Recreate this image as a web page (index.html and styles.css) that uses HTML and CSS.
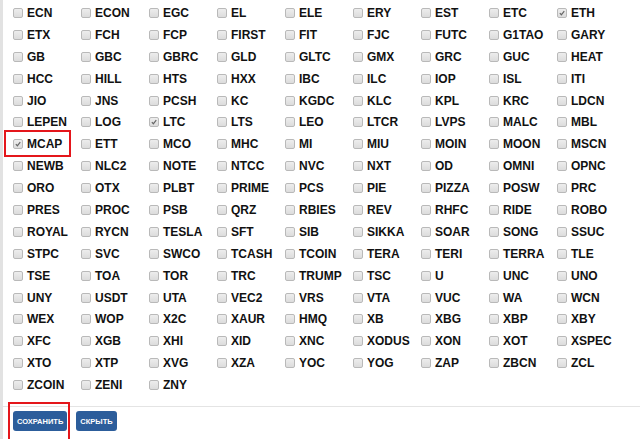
FILE: index.html
```html
<!DOCTYPE html>
<html>
<head>
<meta charset="utf-8">
<link rel="stylesheet" href="styles.css">
</head>
<body>
<div class="panel">
  <div class="grid">
    <label class="item"><span class="cb"></span>ECN</label>
    <label class="item"><span class="cb"></span>ECON</label>
    <label class="item"><span class="cb"></span>EGC</label>
    <label class="item"><span class="cb"></span>EL</label>
    <label class="item"><span class="cb"></span>ELE</label>
    <label class="item"><span class="cb"></span>ERY</label>
    <label class="item"><span class="cb"></span>EST</label>
    <label class="item"><span class="cb"></span>ETC</label>
    <label class="item"><span class="cb checked"><svg viewBox="0 0 10 10"><path d="M2.3 5.2 L4.2 7.2 L7.8 2.6"/></svg></span>ETH</label>

    <label class="item"><span class="cb"></span>ETX</label>
    <label class="item"><span class="cb"></span>FCH</label>
    <label class="item"><span class="cb"></span>FCP</label>
    <label class="item"><span class="cb"></span>FIRST</label>
    <label class="item"><span class="cb"></span>FIT</label>
    <label class="item"><span class="cb"></span>FJC</label>
    <label class="item"><span class="cb"></span>FUTC</label>
    <label class="item"><span class="cb"></span>G1TAO</label>
    <label class="item"><span class="cb"></span>GARY</label>

    <label class="item"><span class="cb"></span>GB</label>
    <label class="item"><span class="cb"></span>GBC</label>
    <label class="item"><span class="cb"></span>GBRC</label>
    <label class="item"><span class="cb"></span>GLD</label>
    <label class="item"><span class="cb"></span>GLTC</label>
    <label class="item"><span class="cb"></span>GMX</label>
    <label class="item"><span class="cb"></span>GRC</label>
    <label class="item"><span class="cb"></span>GUC</label>
    <label class="item"><span class="cb"></span>HEAT</label>

    <label class="item"><span class="cb"></span>HCC</label>
    <label class="item"><span class="cb"></span>HILL</label>
    <label class="item"><span class="cb"></span>HTS</label>
    <label class="item"><span class="cb"></span>HXX</label>
    <label class="item"><span class="cb"></span>IBC</label>
    <label class="item"><span class="cb"></span>ILC</label>
    <label class="item"><span class="cb"></span>IOP</label>
    <label class="item"><span class="cb"></span>ISL</label>
    <label class="item"><span class="cb"></span>ITI</label>

    <label class="item"><span class="cb"></span>JIO</label>
    <label class="item"><span class="cb"></span>JNS</label>
    <label class="item"><span class="cb"></span>PCSH</label>
    <label class="item"><span class="cb"></span>KC</label>
    <label class="item"><span class="cb"></span>KGDC</label>
    <label class="item"><span class="cb"></span>KLC</label>
    <label class="item"><span class="cb"></span>KPL</label>
    <label class="item"><span class="cb"></span>KRC</label>
    <label class="item"><span class="cb"></span>LDCN</label>

    <label class="item"><span class="cb"></span>LEPEN</label>
    <label class="item"><span class="cb"></span>LOG</label>
    <label class="item"><span class="cb checked"><svg viewBox="0 0 10 10"><path d="M2.3 5.2 L4.2 7.2 L7.8 2.6"/></svg></span>LTC</label>
    <label class="item"><span class="cb"></span>LTS</label>
    <label class="item"><span class="cb"></span>LEO</label>
    <label class="item"><span class="cb"></span>LTCR</label>
    <label class="item"><span class="cb"></span>LVPS</label>
    <label class="item"><span class="cb"></span>MALC</label>
    <label class="item"><span class="cb"></span>MBL</label>

    <label class="item highlight"><span class="cb checked"><svg viewBox="0 0 10 10"><path d="M2.3 5.2 L4.2 7.2 L7.8 2.6"/></svg></span>MCAP</label>
    <label class="item"><span class="cb"></span>ETT</label>
    <label class="item"><span class="cb"></span>MCO</label>
    <label class="item"><span class="cb"></span>MHC</label>
    <label class="item"><span class="cb"></span>MI</label>
    <label class="item"><span class="cb"></span>MIU</label>
    <label class="item"><span class="cb"></span>MOIN</label>
    <label class="item"><span class="cb"></span>MOON</label>
    <label class="item"><span class="cb"></span>MSCN</label>

    <label class="item"><span class="cb"></span>NEWB</label>
    <label class="item"><span class="cb"></span>NLC2</label>
    <label class="item"><span class="cb"></span>NOTE</label>
    <label class="item"><span class="cb"></span>NTCC</label>
    <label class="item"><span class="cb"></span>NVC</label>
    <label class="item"><span class="cb"></span>NXT</label>
    <label class="item"><span class="cb"></span>OD</label>
    <label class="item"><span class="cb"></span>OMNI</label>
    <label class="item"><span class="cb"></span>OPNC</label>

    <label class="item"><span class="cb"></span>ORO</label>
    <label class="item"><span class="cb"></span>OTX</label>
    <label class="item"><span class="cb"></span>PLBT</label>
    <label class="item"><span class="cb"></span>PRIME</label>
    <label class="item"><span class="cb"></span>PCS</label>
    <label class="item"><span class="cb"></span>PIE</label>
    <label class="item"><span class="cb"></span>PIZZA</label>
    <label class="item"><span class="cb"></span>POSW</label>
    <label class="item"><span class="cb"></span>PRC</label>

    <label class="item"><span class="cb"></span>PRES</label>
    <label class="item"><span class="cb"></span>PROC</label>
    <label class="item"><span class="cb"></span>PSB</label>
    <label class="item"><span class="cb"></span>QRZ</label>
    <label class="item"><span class="cb"></span>RBIES</label>
    <label class="item"><span class="cb"></span>REV</label>
    <label class="item"><span class="cb"></span>RHFC</label>
    <label class="item"><span class="cb"></span>RIDE</label>
    <label class="item"><span class="cb"></span>ROBO</label>

    <label class="item"><span class="cb"></span>ROYAL</label>
    <label class="item"><span class="cb"></span>RYCN</label>
    <label class="item"><span class="cb"></span>TESLA</label>
    <label class="item"><span class="cb"></span>SFT</label>
    <label class="item"><span class="cb"></span>SIB</label>
    <label class="item"><span class="cb"></span>SIKKA</label>
    <label class="item"><span class="cb"></span>SOAR</label>
    <label class="item"><span class="cb"></span>SONG</label>
    <label class="item"><span class="cb"></span>SSUC</label>

    <label class="item"><span class="cb"></span>STPC</label>
    <label class="item"><span class="cb"></span>SVC</label>
    <label class="item"><span class="cb"></span>SWCO</label>
    <label class="item"><span class="cb"></span>TCASH</label>
    <label class="item"><span class="cb"></span>TCOIN</label>
    <label class="item"><span class="cb"></span>TERA</label>
    <label class="item"><span class="cb"></span>TERI</label>
    <label class="item"><span class="cb"></span>TERRA</label>
    <label class="item"><span class="cb"></span>TLE</label>

    <label class="item"><span class="cb"></span>TSE</label>
    <label class="item"><span class="cb"></span>TOA</label>
    <label class="item"><span class="cb"></span>TOR</label>
    <label class="item"><span class="cb"></span>TRC</label>
    <label class="item"><span class="cb"></span>TRUMP</label>
    <label class="item"><span class="cb"></span>TSC</label>
    <label class="item"><span class="cb"></span>U</label>
    <label class="item"><span class="cb"></span>UNC</label>
    <label class="item"><span class="cb"></span>UNO</label>

    <label class="item"><span class="cb"></span>UNY</label>
    <label class="item"><span class="cb"></span>USDT</label>
    <label class="item"><span class="cb"></span>UTA</label>
    <label class="item"><span class="cb"></span>VEC2</label>
    <label class="item"><span class="cb"></span>VRS</label>
    <label class="item"><span class="cb"></span>VTA</label>
    <label class="item"><span class="cb"></span>VUC</label>
    <label class="item"><span class="cb"></span>WA</label>
    <label class="item"><span class="cb"></span>WCN</label>

    <label class="item"><span class="cb"></span>WEX</label>
    <label class="item"><span class="cb"></span>WOP</label>
    <label class="item"><span class="cb"></span>X2C</label>
    <label class="item"><span class="cb"></span>XAUR</label>
    <label class="item"><span class="cb"></span>HMQ</label>
    <label class="item"><span class="cb"></span>XB</label>
    <label class="item"><span class="cb"></span>XBG</label>
    <label class="item"><span class="cb"></span>XBP</label>
    <label class="item"><span class="cb"></span>XBY</label>

    <label class="item"><span class="cb"></span>XFC</label>
    <label class="item"><span class="cb"></span>XGB</label>
    <label class="item"><span class="cb"></span>XHI</label>
    <label class="item"><span class="cb"></span>XID</label>
    <label class="item"><span class="cb"></span>XNC</label>
    <label class="item"><span class="cb"></span>XODUS</label>
    <label class="item"><span class="cb"></span>XON</label>
    <label class="item"><span class="cb"></span>XOT</label>
    <label class="item"><span class="cb"></span>XSPEC</label>

    <label class="item"><span class="cb"></span>XTO</label>
    <label class="item"><span class="cb"></span>XTP</label>
    <label class="item"><span class="cb"></span>XVG</label>
    <label class="item"><span class="cb"></span>XZA</label>
    <label class="item"><span class="cb"></span>YOC</label>
    <label class="item"><span class="cb"></span>YOG</label>
    <label class="item"><span class="cb"></span>ZAP</label>
    <label class="item"><span class="cb"></span>ZBCN</label>
    <label class="item"><span class="cb"></span>ZCL</label>

    <label class="item"><span class="cb"></span>ZCOIN</label>
    <label class="item"><span class="cb"></span>ZENI</label>
    <label class="item"><span class="cb"></span>ZNY</label>
  </div>
  <div class="footer">
    <button class="btn highlight-btn">СОХРАНИТЬ</button>
    <button class="btn">СКРЫТЬ</button>
  </div>
</div>
</body>
</html>
```

FILE: styles.css
```css
html, body {
  margin: 0;
  padding: 0;
  background: #fff;
}

body {
  font-family: "Liberation Sans", Arial, sans-serif;
  color: #111;
  height: 439px;
  overflow: hidden;
}

.panel {
  border-left: 3px solid #e2e2e2;
  min-height: 439px;
  box-sizing: border-box;
}

.grid {
  display: grid;
  grid-template-columns: repeat(9, 68px);
  grid-auto-rows: 21.9px;
  padding: 2px 0 0 10px;
  height: 406px;
  box-sizing: border-box;
}

.item {
  position: relative;
  display: flex;
  align-items: center;
  font-size: 12px;
  font-weight: bold;
  white-space: nowrap;
}

.cb {
  width: 10px;
  height: 10px;
  box-sizing: border-box;
  border: 1px solid #b9b9b9;
  border-radius: 2px;
  background: linear-gradient(#ededed, #dcdcdc);
  margin-right: 4px;
  flex: none;
  display: flex;
}

.cb svg {
  width: 8px;
  height: 8px;
  fill: none;
  stroke: #666;
  stroke-width: 1.5;
}

.highlight::after {
  content: "";
  position: absolute;
  left: -9px;
  top: -3px;
  width: 67px;
  height: 27px;
  border: 2px solid #e4161b;
  box-sizing: border-box;
}

.footer {
  border-top: 1px solid #e4e4e4;
  padding: 4px 0 0 10px;
  display: flex;
  gap: 9px;
}

.btn {
  position: relative;
  font-family: "Liberation Sans", Arial, sans-serif;
  font-size: 7.5px;
  font-weight: bold;
  color: #fff;
  background: #2c5d9b;
  border: none;
  border-radius: 3px;
  height: 20px;
  padding: 0 4px;
  cursor: pointer;
}

.highlight-btn::after {
  content: "";
  position: absolute;
  left: -5px;
  top: -9px;
  width: 62px;
  height: 45px;
  border: 2px solid #e4161b;
  box-sizing: border-box;
}
```
